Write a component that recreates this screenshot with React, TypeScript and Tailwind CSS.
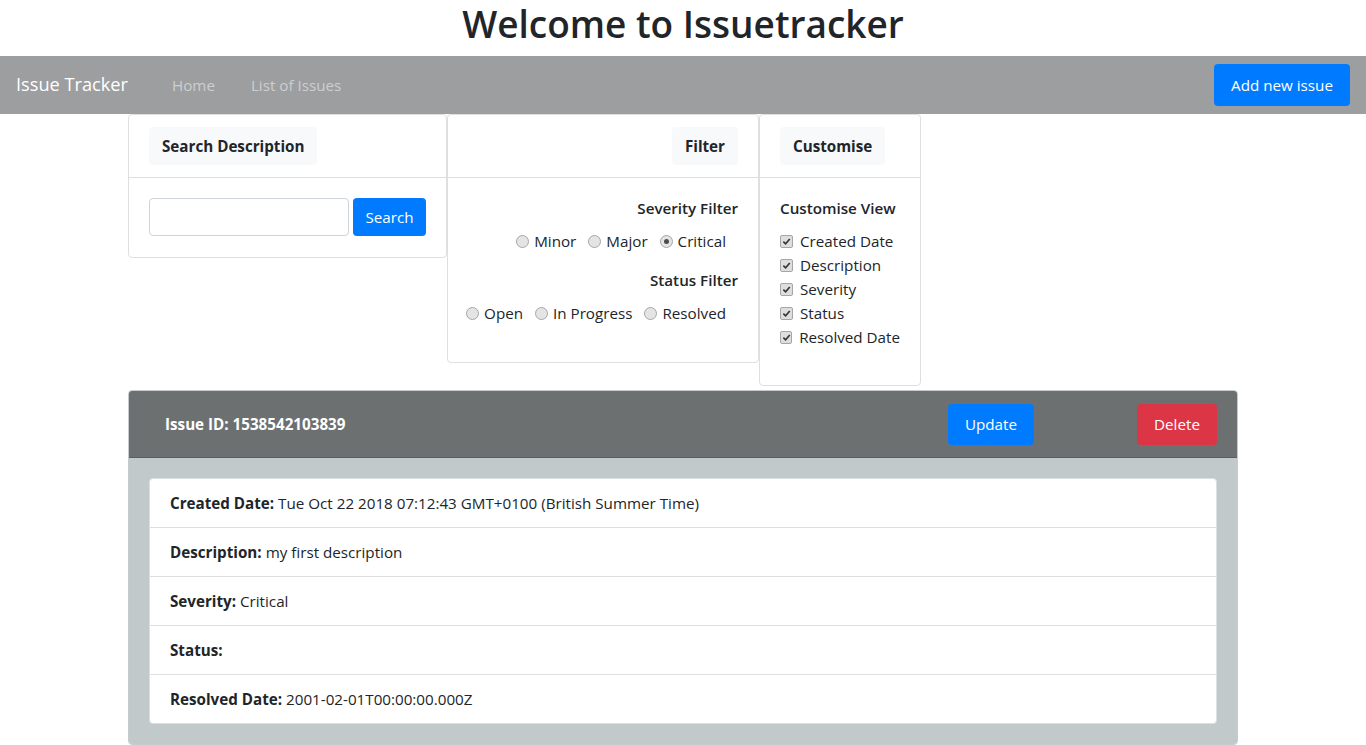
import React from "react";

const font = { fontFamily: '"Open Sans", "Noto Sans", sans-serif' };

const Radio = ({ label, checked }: { label: string; checked?: boolean }) => (
  <label className="inline-flex items-center mr-3 whitespace-nowrap">
    <span className="w-[13px] h-[13px] rounded-full border border-[#a6a6a6] bg-[#e4e4e4] mr-[5px] flex items-center justify-center">
      {checked ? <span className="w-[5px] h-[5px] rounded-full bg-[#4d4d4d]"></span> : null}
    </span>
    <span>{label}</span>
  </label>
);

const Check = ({ label }: { label: string }) => (
  <label className="flex items-center h-6 whitespace-nowrap">
    <span className="w-[13px] h-[13px] rounded-[2px] border border-[#a6a6a6] bg-[#dedede] mr-[7px] flex items-center justify-center">
      <svg viewBox="0 0 10 10" className="w-[9px] h-[9px]">
        <path d="M1.5 5.2 L4 7.6 L8.6 2.2" fill="none" stroke="#333" strokeWidth="1.8" />
      </svg>
    </span>
    <span>{label}</span>
  </label>
);

const CardHeader = ({ title, right }: { title: string; right?: boolean }) => (
  <div className={`px-5 py-3 border-b border-[#dfdfdf] flex ${right ? "justify-end" : ""}`}>
    <span className="h-[38px] px-[13px] flex items-center bg-[#f8f9fa] rounded font-bold whitespace-nowrap">
      {title}
    </span>
  </div>
);

const rows = [
  { label: "Created Date:", value: "Tue Oct 22 2018 07:12:43 GMT+0100 (British Summer Time)" },
  { label: "Description:", value: "my first description" },
  { label: "Severity:", value: "Critical" },
  { label: "Status:", value: "" },
  { label: "Resolved Date:", value: "2001-02-01T00:00:00.000Z" },
];

const App = () => {
  return (
    <div className="text-[#212529] text-[15.2px] bg-white min-h-screen" style={font}>
      <h1 className="text-[37px] leading-[48px] font-semibold text-center mb-2">
        Welcome to Issuetracker
      </h1>

      <nav className="h-[58px] bg-[#9d9ea0] flex items-center px-4">
        <span className="text-white text-[18.2px]">Issue Tracker</span>
        <div className="flex ml-[44px] text-[#cdcecf]">
          <span>Home</span>
          <span className="ml-[36px]">List of Issues</span>
        </div>
        <button className="ml-auto h-[42px] w-[136px] rounded bg-[#007bff] text-white">
          Add new issue
        </button>
      </nav>

      <div className="w-[1110px] mx-auto">
        <div className="flex items-start">
          <div className="w-[319px] border border-[#dfdfdf] rounded">
            <CardHeader title="Search Description" />
            <div className="pt-5 pb-[21px] px-5 flex items-center">
              <input className="w-[200px] h-[38px] border border-[#ced4da] rounded px-3" />
              <button className="ml-1 h-[38px] w-[73px] rounded bg-[#007bff] text-white">
                Search
              </button>
            </div>
          </div>

          <div className="w-[312px] border border-[#dfdfdf] rounded">
            <CardHeader title="Filter" right />
            <div className="px-5 pt-[21px] pb-[37px] text-right">
              <div className="font-semibold leading-[19px]">Severity Filter</div>
              <div className="mt-[11px] leading-6 flex justify-end">
                <Radio label="Minor" />
                <Radio label="Major" />
                <Radio label="Critical" checked />
              </div>
              <div className="mt-[18px] font-semibold leading-[19px]">Status Filter</div>
              <div className="mt-[11px] leading-6 flex justify-end">
                <Radio label="Open" />
                <Radio label="In Progress" />
                <Radio label="Resolved" />
              </div>
            </div>
          </div>

          <div className="w-[162px] border border-[#dfdfdf] rounded">
            <CardHeader title="Customise" />
            <div className="px-5 pt-[21px] pb-[36px]">
              <div className="font-semibold leading-[19px] whitespace-nowrap">Customise View</div>
              <div className="mt-[11px]">
                <Check label="Created Date" />
                <Check label="Description" />
                <Check label="Severity" />
                <Check label="Status" />
                <Check label="Resolved Date" />
              </div>
            </div>
          </div>
        </div>

        <div className="mt-1 border border-[#c8cbcd] rounded overflow-hidden">
          <div className="h-[67px] bg-[#6c7071] border-b border-[#5a5e5f] flex items-center px-5">
            <span className="pl-4 text-white font-bold">Issue ID: 1538542103839</span>
            <button className="ml-auto h-[41px] w-[86px] rounded bg-[#007bff] text-white">Update</button>
            <button className="ml-[103px] h-[41px] w-[80px] rounded bg-[#dc3545] text-white">Delete</button>
          </div>
          <div className="bg-[#c2c9cb] p-5">
            <div className="bg-white border border-[#dcdfe0] rounded">
              {rows.map((r, i) => (
                <div
                  key={r.label}
                  className={`px-5 py-3 leading-6 ${i < rows.length - 1 ? "border-b border-[#dfdfdf]" : ""}`}
                >
                  <b>{r.label}</b> {r.value}
                </div>
              ))}
            </div>
          </div>
        </div>
      </div>
    </div>
  );
};

export default App;
